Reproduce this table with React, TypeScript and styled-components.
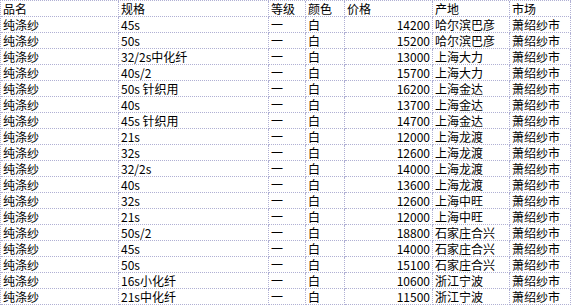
import React from 'react';
import styled, { createGlobalStyle } from 'styled-components';

const GlobalStyle = createGlobalStyle`
  html, body {
    margin: 0;
    padding: 0;
    background: #ffffff;
  }
`;

type Row = {
  spec: string;
  price: number;
  origin: string;
};

const rows: Row[] = [
  { spec: '45s', price: 14200, origin: '哈尔滨巴彦' },
  { spec: '50s', price: 15200, origin: '哈尔滨巴彦' },
  { spec: '32/2s中化纤', price: 13000, origin: '上海大力' },
  { spec: '40s/2', price: 15700, origin: '上海大力' },
  { spec: '50s 针织用', price: 16200, origin: '上海金达' },
  { spec: '40s', price: 13700, origin: '上海金达' },
  { spec: '45s 针织用', price: 14700, origin: '上海金达' },
  { spec: '21s', price: 12000, origin: '上海龙渡' },
  { spec: '32s', price: 12600, origin: '上海龙渡' },
  { spec: '32/2s', price: 14000, origin: '上海龙渡' },
  { spec: '40s', price: 13600, origin: '上海龙渡' },
  { spec: '32s', price: 12600, origin: '上海中旺' },
  { spec: '21s', price: 12000, origin: '上海中旺' },
  { spec: '50s/2', price: 18800, origin: '石家庄合兴' },
  { spec: '45s', price: 14000, origin: '石家庄合兴' },
  { spec: '50s', price: 15100, origin: '石家庄合兴' },
  { spec: '16s小化纤', price: 10600, origin: '浙江宁波' },
  { spec: '21s中化纤', price: 11500, origin: '浙江宁波' },
];

const headers = ['品名', '规格', '等级', '颜色', '价格', '产地', '市场'];

const Sheet = styled.div`
  display: grid;
  grid-template-columns: 118px 150px 37px 39px 88px 77px 61px;
  grid-auto-rows: 16px;
  width: max-content;
  border-top: 1px dotted #b0b0d4;
  border-left: 1px dotted #b0b0d4;
  font-family: 'Noto Sans CJK SC', 'Liberation Sans', sans-serif;
  font-size: 12px;
  color: #000000;
`;

const Cell = styled.div<{ $align?: 'left' | 'right' }>`
  box-sizing: border-box;
  border-right: 1px dotted #b0b0d4;
  border-bottom: 1px dotted #b0b0d4;
  padding: 0 2px;
  line-height: 15px;
  white-space: nowrap;
  text-align: ${(p) => p.$align ?? 'left'};
`;

export default function App() {
  return (
    <>
      <GlobalStyle />
      <Sheet>
        {headers.map((h) => (
          <Cell key={h}>{h}</Cell>
        ))}
        {rows.map((r, i) => (
          <React.Fragment key={i}>
            <Cell>纯涤纱</Cell>
            <Cell>{r.spec}</Cell>
            <Cell>一</Cell>
            <Cell>白</Cell>
            <Cell $align="right">{r.price}</Cell>
            <Cell>{r.origin}</Cell>
            <Cell>萧绍纱市</Cell>
          </React.Fragment>
        ))}
      </Sheet>
    </>
  );
}
